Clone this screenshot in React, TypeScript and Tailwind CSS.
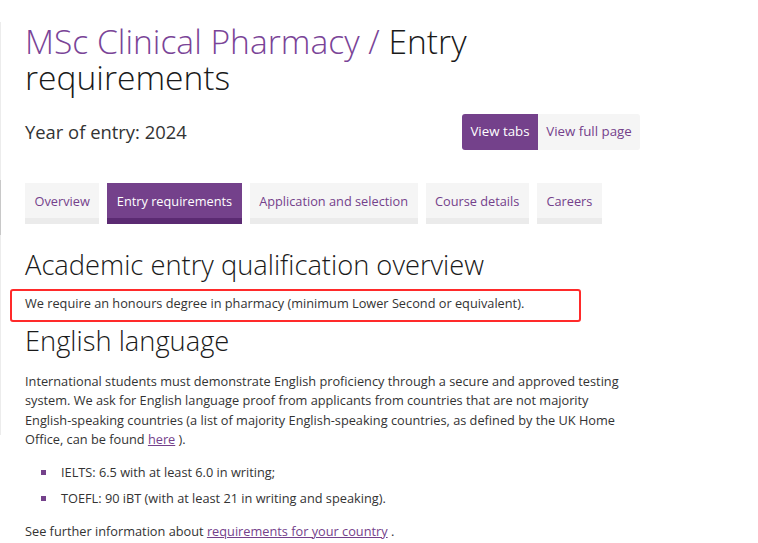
import React from "react";

const tabs = [
  { label: "Overview", active: false },
  { label: "Entry requirements", active: true },
  { label: "Application and selection", active: false },
  { label: "Course details", active: false },
  { label: "Careers", active: false },
];

const App = () => {
  return (
    <div
      className="relative min-h-[543px] bg-white text-[#333]"
      style={{ fontFamily: '"Open Sans", "Liberation Sans", sans-serif' }}
    >
      {/* faint page edge */}
      <div className="absolute left-0 top-[22px] h-[413px] w-px bg-[#ececec]" />
      <div className="absolute left-0 top-[180px] h-[55px] w-px bg-[#c8c8c8]" />

      <div className="ml-[25px] w-[615px] pt-[23px]">
        <h1 className="text-[33.6px] font-light leading-[36px] text-[#1a1a1a]">
          <span className="text-[#7a4497]">MSc Clinical Pharmacy / </span>
          Entry requirements
        </h1>

        <div className="mt-[19px] flex items-center justify-between">
          <p className="text-[18.4px] leading-[28px] text-[#333]">Year of entry: 2024</p>
          <div className="flex text-[13.3px]">
            <span className="flex h-[36px] w-[76px] items-center justify-center rounded-l-[3px] bg-[#74418b] text-white">
              View tabs
            </span>
            <span className="flex h-[36px] w-[102px] items-center justify-center rounded-r-[3px] bg-[#f5f5f5] text-[#74418b]">
              View full page
            </span>
          </div>
        </div>

        <div className="mt-[33px] flex gap-[8px]">
          {tabs.map((t) => (
            <div
              key={t.label}
              className={
                t.active
                  ? "flex h-[41px] items-center whitespace-nowrap border-b-[6px] border-[#5b2a72] bg-[#74418b] px-[9.5px] pt-[2px] text-[12.75px] text-white"
                  : "flex h-[41px] items-center whitespace-nowrap border-b-[6px] border-[#ebebeb] bg-[#f5f5f5] px-[9.5px] pt-[2px] text-[12.75px] text-[#74418b]"
              }
            >
              {t.label}
            </div>
          ))}
        </div>

        <h2 className="mt-[24px] text-[27.3px] font-light leading-[34px] text-[#1a1a1a]">
          Academic entry qualification overview
        </h2>
        <div className="relative mt-[12px]">
          <p className="text-[12.75px] leading-[19.5px]">
            We require an honours degree in pharmacy (minimum Lower Second or equivalent).
          </p>
          <div className="absolute left-[-15px] top-[-5px] h-[33px] w-[571px] rounded-[3px] border-2 border-[#ff2a2a]" />
        </div>

        <h2 className="mt-[10.5px] text-[27.3px] font-light leading-[34px] text-[#1a1a1a]">
          English language
        </h2>
        <p className="mt-[13.5px] w-[600px] text-[12.75px] leading-[19.5px]">
          International students must demonstrate English proficiency through a secure and approved testing
          system. We ask for English language proof from applicants from countries that are not majority
          English-speaking countries (a list of majority English-speaking countries, as defined by the UK Home
          Office, can be found <a className="text-[#74418b] underline">here</a> ).
        </p>
        <ul className="mt-[13.5px] text-[12.75px] leading-[19.5px]">
          {["IELTS: 6.5 with at least 6.0 in writing;", "TOEFL: 90 iBT (with at least 21 in writing and speaking)."].map(
            (item) => (
              <li key={item} className="mb-[6.5px] flex items-center">
                <span className="ml-[16px] mr-[15px] h-[5px] w-[5px] bg-[#74418b]" />
                {item}
              </li>
            )
          )}
        </ul>
        <p className="mt-[13px] text-[12.75px] leading-[19.5px]">
          See further information about <a className="text-[#74418b] underline">requirements for your country</a> .
        </p>
      </div>
    </div>
  );
};

export default App;
